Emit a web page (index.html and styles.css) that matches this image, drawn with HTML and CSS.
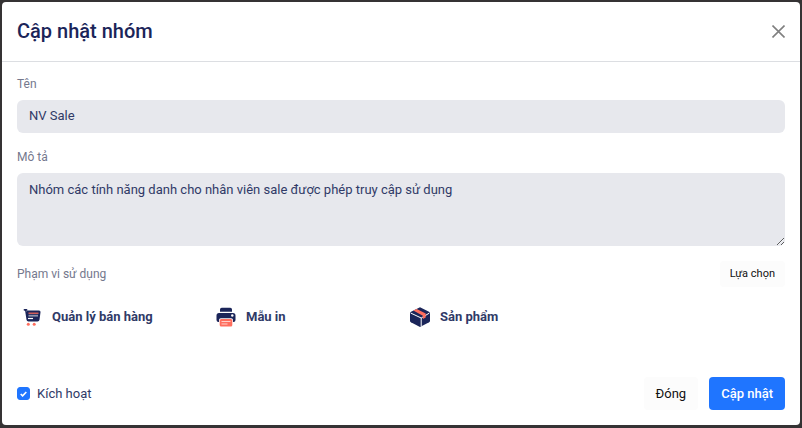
FILE: index.html
```html
<!DOCTYPE html>
<html lang="vi">
<head>
  <meta charset="UTF-8">
  <meta name="viewport" content="width=device-width, initial-scale=1">
  <title>Cập nhật nhóm</title>
  <link rel="stylesheet" href="styles.css">
</head>
<body>
  <form class="modal" role="dialog" aria-labelledby="modal-title">
    <header class="modal-header">
      <h1 class="modal-title" id="modal-title">Cập nhật nhóm</h1>
      <button type="button" class="btn-close" aria-label="Đóng cửa sổ">
        <svg width="13" height="13" viewBox="0 0 13 13"><path d="M.5 .5l12 12M12.500 .5l-12 12" fill="none" stroke="#808080" stroke-width="1.600"/></svg>
      </button>
    </header>

    <div class="modal-body">
      <div class="field">
        <label for="name">Tên</label>
        <input type="text" id="name" class="control" value="NV Sale" readonly>
      </div>
      <div class="field">
        <label for="description">Mô tả</label>
        <textarea id="description" class="control control-area" readonly>Nhóm các tính năng danh cho nhân viên sale được phép truy cập sử dụng</textarea>
      </div>

      <div class="scope-head">
        <span class="scope-label">Phạm vi sử dụng</span>
        <button type="button" class="btn btn-light btn-sm">Lựa chọn</button>
      </div>
      <ul class="scope-list">
        <li class="scope-item">
          <svg width="20" height="20" viewBox="0 0 20 20">
            <path d="M2.500 2.800h2" fill="none" stroke="#1b2559" stroke-width="1.800" stroke-linecap="round"/>
            <path d="M4 2.500L5 5V3.500H17a1.500 1.500 0 0 1 1.500 1.700l-1 7.500a2 2 0 0 1-2 1.800H6.500a2 2 0 0 1-2-1.700L3 3z" fill="#1b2559"/>
            <path d="M6.500 6.200h10" stroke="#ff6e5e" stroke-width="1.200"/>
            <path d="M6.500 8.700h9.500" stroke="#8d92ac" stroke-width="1.800"/>
            <path d="M6 11.500h5" stroke="#fff" stroke-width="1.200"/>
            <circle cx="6.300" cy="17.300" r="1.500" fill="#ff6e5e"/>
            <circle cx="12.200" cy="17.300" r="1.500" fill="#ff6e5e"/>
          </svg>
          <span>Quản lý bán hàng</span>
        </li>
        <li class="scope-item">
          <svg width="20" height="20" viewBox="0 0 20 20">
            <path d="M4 4.800V2.500A1.700 1.700 0 0 1 5.700.800h8.600A1.700 1.700 0 0 1 16 2.500v2.300z" fill="#1b2559"/>
            <path d="M3 6h14a2.500 2.500 0 0 1 2.500 2.500V13a2 2 0 0 1-2 2h-15a2 2 0 0 1-2-2V8.500A2.500 2.500 0 0 1 3 6z" fill="#1b2559"/>
            <circle cx="16.300" cy="8.500" r="1.200" fill="#fff"/>
            <rect x="3" y="11.300" width="14" height="8.700" rx="1.800" fill="#fff"/>
            <rect x="3.700" y="12" width="12.600" height="7.500" rx="1.500" fill="#ff6e5e"/>
            <path d="M5.500 14.500h9M5.500 17h6" stroke="#ffd0ca" stroke-width="1.100"/>
          </svg>
          <span>Mẫu in</span>
        </li>
        <li class="scope-item">
          <svg width="20" height="20" viewBox="0 0 20 20">
            <path d="M10 .3l9 4.500q1 .5 1 1.600v7.300q0 1-.9 1.500L10 20 .9 15.200Q0 14.700 0 13.700V6.400Q0 5.300 1 4.800z" fill="#1b2559"/>
            <path d="M.8 6.100L11.200 11v8.500M11.200 11l8-4.800" fill="none" stroke="#fff" stroke-width="1"/>
            <path d="M3.300 3.600L6.700 1.900l9 4.700v4l-2.800 1.500V8.800z" fill="#ff6e5e"/>
          </svg>
          <span>Sản phẩm</span>
        </li>
      </ul>
    </div>

    <footer class="modal-footer">
      <label class="check">
        <input type="checkbox" class="check-input" checked>
        <span class="check-box"><svg width="7" height="6" viewBox="0 0 7 6"><path d="M.7 3l1.900 1.900L6.300 1" fill="none" stroke="#fff" stroke-width="1.600"/></svg></span>
        Kích hoạt
      </label>
      <div class="actions">
        <button type="button" class="btn btn-light">Đóng</button>
        <button type="submit" class="btn btn-primary">Cập nhật</button>
      </div>
    </footer>
  </form>
</body>
</html>
```

FILE: styles.css
```css
* { box-sizing: border-box; }

body {
  margin: 0;
  padding: 2px 2px 3px;
  background: #353334;
  color: #1b2559;
  font: 13px/20px Roboto, sans-serif;
}

button, input, textarea { font: inherit; }
button { border: 0; cursor: pointer; }

.modal { background: #fff; border-radius: 4px; }

.modal-header {
  display: flex;
  align-items: center;
  justify-content: space-between;
  padding: 15px;
  border-bottom: 1px solid #dcdee2;
}
.modal-title { margin: 0; font-size: 20px; font-weight: 500; line-height: 29px; }
.btn-close { display: flex; padding: 0; background: none; }

.modal-body { padding: 13px 15px 0; }

.field { margin-bottom: 15px; }
.field label, .scope-label { color: #74788d; font-size: 12px; line-height: 18px; }
.field label { display: block; margin-bottom: 7px; }
.control {
  display: block;
  width: 100%;
  height: 33px;
  padding: 6px 12px 8px;
  border: 0;
  border-radius: 6px;
  background: #e7e8ed;
  color: #303a67;
}
.field .control-area { height: 73px; padding-top: 7px; resize: vertical; }

.scope-head { display: flex; align-items: center; justify-content: space-between; }
.scope-list {
  display: grid;
  grid-template-columns: repeat(4, 1fr);
  margin: 20px -4px 0;
  padding: 0;
  list-style: none;
}
.scope-item {
  display: flex;
  align-items: center;
  gap: 10px;
  padding-left: 9px;
  color: #303a67;
  font-weight: 700;
}

.modal-footer {
  display: flex;
  align-items: center;
  justify-content: space-between;
  padding: 50px 15px 15px;
}
.check { display: flex; align-items: center; position: relative; color: #303a67; }
.check-input { position: absolute; left: 0; width: 13px; height: 13px; margin: 0; opacity: 0; }
.check-box {
  display: flex;
  align-items: center;
  justify-content: center;
  width: 13px;
  height: 13px;
  margin-right: 7px;
  border: 1px solid #1f75ff;
  border-radius: 3px;
  background: #fff;
}
.check-box svg { visibility: hidden; }
.check-input:checked + .check-box { background: #1f75ff; }
.check-input:checked + .check-box svg { visibility: visible; }
.check-input:focus-visible + .check-box { outline: 2px solid #9cc2ff; }

.actions { display: flex; gap: 11px; }
.btn { padding: 6px 12px; border-radius: 4px; line-height: 21px; }
.btn-light { background: #fcfcfc; color: #111; }
.btn-primary { background: #1f75ff; color: #fff; font-weight: 500; }
.btn-sm { padding: 4px 10px; font-size: 11px; line-height: 18px; }
```
